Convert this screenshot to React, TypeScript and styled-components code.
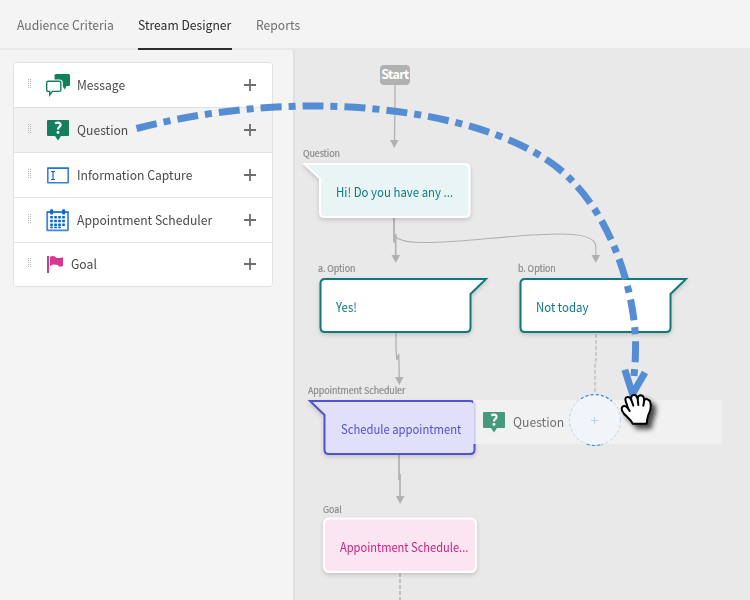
import React from 'react';
import styled, { createGlobalStyle } from 'styled-components';

const GlobalStyle = createGlobalStyle`
  * { box-sizing: border-box; }
  body { margin: 0; background: #e9e9e9; overflow: hidden; }
`;

const Page = styled.div`
  position: relative;
  width: 750px;
  height: 600px;
  display: flex;
  flex-direction: column;
  overflow: hidden;
  font-family: 'Noto Sans CJK SC', 'Noto Sans', sans-serif;
  font-size: 13px;
  color: #4b4b4b;
`;

const Tabs = styled.nav`
  display: flex;
  gap: 24px;
  height: 50px;
  padding-left: 17px;
  background: linear-gradient(#f4f4f4 48px, #e8e8e8 48px);
`;

const Tab = styled.div<{ $active?: boolean; $w: number }>`
  width: ${p => p.$w}px;
  height: 50px;
  line-height: 50px;
  white-space: nowrap;
  color: ${p => (p.$active ? '#2c2c2c' : '#6e6e6e')};
  border-bottom: ${p => (p.$active ? '2px solid #2c2c2c' : '0')};
`;

const Narrow = styled.span<{ $k?: number }>`
  display: inline-block;
  white-space: nowrap;
  transform: scaleX(${p => p.$k ?? 0.935});
  transform-origin: left center;
`;

const Body = styled.div`
  display: flex;
  flex: 1;
`;

const Sidebar = styled.aside`
  width: 295px;
  padding: 12px 0 0 13px;
  background: #f4f4f4;
  border-right: 2px solid #e1e1e1;
`;

const CardList = styled.div`
  width: 260px;
  border: 1px solid #e1e1e1;
  border-radius: 4px;
  background: #fff;
  overflow: hidden;
`;

const CardRow = styled.div<{ $active?: boolean }>`
  display: flex;
  align-items: center;
  height: 45px;
  padding: 0 16px 0 13px;
  background: ${p => (p.$active ? '#f2f2f2' : '#fff')};
  border-bottom: 1px solid #e1e1e1;
  &:last-child { height: 43px; padding-bottom: 2px; border-bottom: 0; }
  svg { display: block; flex: none; }
`;

const IconSlot = styled.span<{ $w: number; $offset: number }>`
  width: ${p => p.$w}px;
  margin-left: ${p => p.$offset}px;
`;

const RowLabel = styled.span`
  flex: 1;
  line-height: 20px;
  white-space: nowrap;
`;

const Canvas = styled.main`
  flex: 1;
  background: #e9e9e9;
`;

const Layer = styled.svg`
  position: absolute;
  inset: 0;
`;

const NodeText = styled.div<{ $x: number; $y: number; $c: string }>`
  position: absolute;
  left: ${p => p.$x}px;
  top: ${p => p.$y}px;
  font-size: 12.5px;
  line-height: 20px;
  white-space: nowrap;
  color: ${p => p.$c};
`;

const Caption = styled.div<{ $x: number; $y: number }>`
  position: absolute;
  left: ${p => p.$x}px;
  top: ${p => p.$y}px;
  font-size: 9.3px;
  line-height: 14px;
  letter-spacing: -0.1px;
  white-space: nowrap;
  color: #8a8a8a;
  -webkit-text-stroke: 0.2px #8a8a8a;
  transform: scaleX(0.96);
  transform-origin: left center;
`;

const StartBadge = styled.div`
  position: absolute;
  left: 380px;
  top: 65px;
  width: 30px;
  height: 20px;
  display: flex;
  justify-content: center;
  border-radius: 4px;
  background: #b1b1b1;
  color: #fff;
  font-size: 12.5px;
  font-weight: 700;
  letter-spacing: -0.6px;
  line-height: 18px;
`;

const DragGhost = styled.div`
  position: absolute;
  left: 473px;
  top: 400px;
  width: 249px;
  height: 44px;
  display: flex;
  align-items: center;
  gap: 8px;
  padding-left: 10px;
  line-height: 20px;
  background: #f4f4f4;
  opacity: 0.76;
`;

const Grip = () => (
  <svg width="6" height="12" viewBox="0 0 6 12" shapeRendering="crispEdges">
    {[0, 2, 4, 6, 8].map(y => (
      <g key={y} fill="#b5b5b5">
        <rect x="1" y={y} width="1" height="1" />
        <rect x="3" y={y} width="1" height="1" />
      </g>
    ))}
  </svg>
);

const Plus = () => (
  <svg width="12" height="12" viewBox="0 0 12 12">
    <path d="M0 6H12M6 0V12" stroke="#6e6e6e" strokeWidth="1.8" />
  </svg>
);

const MessageIcon = () => (
  <svg width="25" height="24" viewBox="0 0 25 24">
    <path d="M10 1H22.5Q24 1 24 2.5V11.5Q24 13 22.5 13H20.5L18.8 16.5L16.5 13H8.5V2.5Q8.5 1 10 1Z" fill="#12805c" />
    <path d="M2 8.2H13.5Q15 8.2 15 9.7V17Q15 18.4 13.5 18.4H6.5L3.7 22V18.4H2Q.7 18.4 .7 17V9.5Q.7 8.2 2 8.2Z" fill="#fff" stroke="#fff" strokeWidth="3.6" />
    <path d="M2 8.2H13.5Q14.8 8.2 14.8 9.5V17Q14.8 18.4 13.5 18.4H6.5L3.7 22V18.4H2Q.7 18.4 .7 17V9.5Q.7 8.2 2 8.2Z" fill="#fff" stroke="#12805c" strokeWidth="1.4" />
  </svg>
);

const QuestionIcon = () => (
  <svg width="22" height="21" viewBox="0 0 22 21">
    <path d="M1 0H21Q22 0 22 1V15Q22 16 21 16H14L11 20.5L8 16H1Q0 16 0 15V1Q0 0 1 0Z" fill="#12805c" />
    <path d="M8.2 3.5Q9.4 2.6 11 2.6Q13.6 2.7 13.5 4.9Q13.4 6.2 12.1 7.1Q11 7.9 11 9.6" fill="none" stroke="#fff" strokeWidth="2.3" />
    <rect x="9.6" y="11" width="2.8" height="2.8" rx="1" fill="#fff" />
  </svg>
);

const CaptureIcon = () => (
  <svg width="22" height="17" viewBox="0 0 22 17">
    <rect x="0.8" y="1.2" width="20.4" height="14.6" rx="0.5" fill="#fff" stroke="#3c80dc" strokeWidth="1.6" />
    <path d="M0 1H22" stroke="#0d66d0" strokeWidth="1" />
    <path d="M4 4.5H8M4 12.5H8M6 4.5V12.5" stroke="#0d66d0" strokeWidth="1.2" />
  </svg>
);

const CalendarIcon = () => (
  <svg width="24" height="23" viewBox="0 0 24 23">
    <rect x="1.2" y="3.2" width="20.8" height="18.2" rx="0.5" fill="#fff" stroke="#4384dc" strokeWidth="1.8" />
    <path d="M0.5 3H22.8" stroke="#0d66d0" strokeWidth="1.2" />
    {[5.6, 17.6].map(x => (
      <rect key={x} x={x - 1.5} y="0.3" width="3" height="5.2" rx="1" fill="#0d66d0" />
    ))}
    {[7, 10.7, 14.4].map(y => (
      <g key={y} fill="#0d66d0">
        {[4.2, 8.2, 12.2, 16.2].map(x => (
          <rect key={x} x={x} y={y} width="2.7" height="2.5" rx="0.5" />
        ))}
      </g>
    ))}
    {[4.2, 8.2, 12.2].map(x => (
      <rect key={x} x={x} y="17.6" width="2.7" height="1.6" rx="0.5" fill="#0d66d0" />
    ))}
  </svg>
);

const FlagIcon = () => (
  <svg width="17" height="18" viewBox="0 0 17 18">
    <rect x="0" y="1" width="2" height="17" fill="#d83790" />
    <path d="M3 2Q5.5 .4 8 1.5Q9 3 11 3Q13.5 3.2 16 2.2V11Q13.500 12 11.500 11.300L11 10Q8 9.300 6 9.500L3 11Z" fill="#d83790" />
  </svg>
);

const items = [
  { name: 'Message', icon: <MessageIcon />, offset: 13, slot: 31 },
  { name: 'Question', icon: <QuestionIcon />, offset: 14, slot: 30, active: true },
  { name: 'Information Capture', icon: <CaptureIcon />, offset: 14, slot: 30 },
  { name: 'Appointment Scheduler', icon: <CalendarIcon />, offset: 13, slot: 31 },
  { name: 'Goal', icon: <FlagIcon />, offset: 14, slot: 24 },
];

const gray = '#b1b1b1';

const Nodes = styled.g`
  stroke-width: 2;
  filter: drop-shadow(0 2px 2px rgba(0, 0, 0, 0.16));
`;

const Hand = styled.path`
  fill: #fff;
  stroke: #000;
  stroke-width: 6;
  stroke-linejoin: round;
  filter: drop-shadow(13px 13px 8px rgba(0, 0, 0, 0.7));
`;

const Flow = () => (
  <Layer width="750" height="600" viewBox="0 0 750 600">
    <g fill="none" stroke={gray} strokeWidth="1.3">
      <path d="M395 85V100L394.5 142" />
      <path d="M394 218V242M394 234Q396 241 415 242.3C455 244.5 510 234 560 234Q595 234 595.8 246V256" strokeWidth="1.1" />
      <path d="M394 218V242.5M395.7 234V256" strokeWidth="1.6" />
      <path d="M396 333V348L396.8 360L398.8 354L399.3 378" />
      <path d="M399 455V480M400 474V498" strokeWidth="1.7" />
      <path d="M596 334V360L595 363V393" stroke="#c8c8c8" strokeWidth="1.8" strokeDasharray="4 2" />
      <path d="M400 573V600" stroke="#bcbcbc" strokeWidth="1.8" strokeDasharray="4 2" />
    </g>
    <g fill={gray}>
      <path d="M390 140H398.5L394.3 148Z" />
      <path d="M391.5 255H400L395.7 263Z" />
      <path d="M591.5 255H600L595.7 263Z" />
      <path d="M395 377H403.5L399.3 385Z" />
      <path d="M396 496H404.5L400 504Z" />
    </g>
    <Nodes>
      <path d="M304.5 164H465Q469.5 164 469.5 168.5V212.5Q469.5 217 465 217H324.5Q320 217 320 212.5V178.5Z" fill="#e9f5f5" stroke="#fff" />
      <path d="M325 279H486L470.5 294V327.5Q470.5 332 466 332H325Q320.5 332 320.5 327.5V283.5Q320.5 279 325 279Z" fill="#fff" stroke="#0f797d" />
      <path d="M525 279H686L670.5 294V327.5Q670.5 332 666 332H525Q520.5 332 520.5 327.5V283.5Q520.5 279 525 279Z" fill="#fff" stroke="#0f797d" />
      <path d="M310 401H470Q474.5 401 474.5 405.5V449.5Q474.5 454 470 454H329Q324.5 454 324.5 449.5V415Z" fill="#e0e0f8" stroke="#5151d3" />
      <rect x="324" y="518.5" width="152" height="53.5" rx="5" fill="#fae5f0" stroke="#fff" />
    </Nodes>
  </Layer>
);

const DropTarget = () => (
  <Layer width="750" height="600" viewBox="0 0 750 600">
    <circle cx="595" cy="420" r="25.5" fill="#f1f4f8" />
    <circle cx="595" cy="420" r="25.5" fill="none" stroke="#b9d4f2" strokeDasharray="3 2.2" />
    <path d="M581 398.7A25.5 25.5 0 0 1 612 401.2M587 444.2A25.5 25.5 0 0 0 603 444.2" fill="none" stroke="#3f8de5" strokeWidth="1.2" strokeDasharray="3 2.2" />
    <path d="M591 420.5H598M594.5 417V424" stroke="#b5d2f3" />
  </Layer>
);

const DragOverlay = () => (
  <Layer width="750" height="600" viewBox="0 0 750 600">
    <g fill="none" stroke="#548dd4" strokeWidth="7">
      <path d="M136.5 128.5C192 114 255 105.7 318 106C404 106.5 523 126 574 183C612 222 637 295 635.5 350C635.5 360 634.5 370 634 376" strokeDasharray="21 7 7 7" />
      <path d="M624.8 369.8L632.5 394L645 372.5" />
    </g>
    <g transform="translate(470 360) scale(.33333)">
      <Hand d="M456 152Q453 140 462 138Q468 137 474 145L468 126Q463 113 472 111Q479 109 484 120Q481 107 491 105Q499 103 503 116Q504 106 513 106Q521 107 523 120Q527 115 534 119Q542 122 542 134Q543 148 537 160Q532 170 530 191H488Q483 180 471 170Q461 163 456 152Z" />
      <path d="M474 145L479 153M484 120L490 137M503 116L505 135M523 120L520 137" fill="none" stroke="#000" strokeWidth="6" strokeLinecap="round" />
    </g>
  </Layer>
);

export default function App() {
  return (
    <Page>
      <GlobalStyle />
      <Tabs>
        <Tab $w={97}><Narrow>Audience Criteria</Narrow></Tab>
        <Tab $w={94} $active><Narrow>Stream Designer</Narrow></Tab>
        <Tab $w={45}><Narrow>Reports</Narrow></Tab>
      </Tabs>
      <Body>
        <Sidebar>
          <CardList>
            {items.map(it => (
              <CardRow key={it.name} $active={it.active}>
                <Grip />
                <IconSlot $w={it.slot} $offset={it.offset}>{it.icon}</IconSlot>
                <RowLabel><Narrow>{it.name}</Narrow></RowLabel>
                <Plus />
              </CardRow>
            ))}
          </CardList>
        </Sidebar>
        <Canvas />
      </Body>
      <Flow />
      <StartBadge>Start</StartBadge>
      <Caption $x={303} $y={146}>Question</Caption>
      <Caption $x={318} $y={261}>a. Option</Caption>
      <Caption $x={518} $y={261}>b. Option</Caption>
      <Caption $x={308} $y={383}>Appointment Scheduler</Caption>
      <Caption $x={323} $y={502}>Goal</Caption>
      <NodeText $x={336} $y={182} $c="#0f797d"><Narrow $k={0.915}>Hi! Do you have any ...</Narrow></NodeText>
      <NodeText $x={336} $y={297} $c="#0f797d"><Narrow $k={0.915}>Yes!</Narrow></NodeText>
      <NodeText $x={536} $y={297} $c="#0f797d"><Narrow $k={0.915}>Not today</Narrow></NodeText>
      <NodeText $x={341} $y={419} $c="#5151d3"><Narrow $k={0.9}>Schedule appointment</Narrow></NodeText>
      <NodeText $x={340} $y={537} $c="#c9257f"><Narrow $k={0.887}>Appointment Schedule...</Narrow></NodeText>
      <DragGhost><QuestionIcon /><Narrow>Question</Narrow></DragGhost>
      <DropTarget />
      <DragOverlay />
    </Page>
  );
}
